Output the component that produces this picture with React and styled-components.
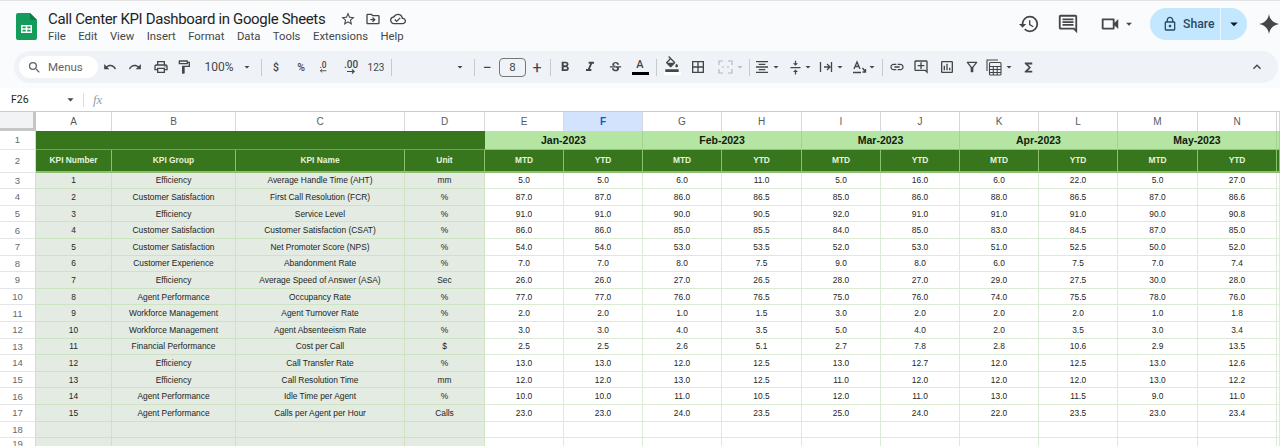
import React from "react";
import styled, { createGlobalStyle } from "styled-components";
import {
  MdSearch, MdUndo, MdRedo, MdOutlinePrint, MdOutlineFormatPaint, MdFormatBold, MdFormatItalic,
  MdStrikethroughS, MdOutlineFormatColorFill, MdBorderAll, MdFormatAlignCenter, MdVerticalAlignCenter,
  MdLink, MdOutlineAddComment, MdOutlineInsertChart, MdOutlineFilterAlt, MdFunctions, MdExpandLess,
  MdHistory, MdOutlineComment, MdOutlineVideocam, MdOutlineLock, MdStarBorder, MdOutlineDriveFileMove,
  MdOutlineCloudDone, MdArrowDropDown,
} from "react-icons/md";

const Global = createGlobalStyle`
  html, body { margin: 0; padding: 0; background: #f9fbfd; }
  body { font-family: "Liberation Sans", Arial, sans-serif; width: 1280px; height: 446px; overflow: hidden; }
`;

const Page = styled.div`
  width: 1280px;
  height: 446px;
  overflow: hidden;
  display: flex;
  flex-direction: column;
  border-top: 1px solid #e3e3e3;
  box-sizing: border-box;
`;

const Header = styled.header`
  height: 50px;
  flex: none;
  display: flex;
  align-items: flex-start;
  padding: 12px 1px 0 16px;
  box-sizing: border-box;
`;

const TitleBlock = styled.div`
  margin-left: 11px;
  margin-top: -5px;
  display: flex;
  flex-direction: column;
`;

const TitleRow = styled.div`
  display: flex;
  align-items: center;
  height: 21px;
`;

const Title = styled.div`
  font-family: "Roboto", sans-serif;
  font-size: 15px;
  letter-spacing: -0.35px;
  color: #1f1f1f;
  width: 287px;
  white-space: nowrap;
`;

const TitleIcon = styled.span`
  display: flex;
  justify-content: center;
  width: 25px;
  color: #444746;
  font-size: 16px;
`;

const MenuRow = styled.nav`
  display: flex;
  gap: 12.5px;
  margin-top: 1px;
`;

const MenuItem = styled.span`
  font-family: "Roboto", sans-serif;
  font-size: 11.3px;
  line-height: 14px;
  color: #444746;
`;

const Actions = styled.div`
  margin-left: auto;
  margin-top: -5px;
  display: flex;
  align-items: center;
  height: 32px;
`;

const ActionIcon = styled.span`
  display: flex;
  align-items: center;
  justify-content: center;
  width: ${(p) => p.$w}px;
  margin-right: ${(p) => p.$mr || 0}px;
  color: #444746;
  font-size: ${(p) => p.$size || 22}px;
`;

const ShareButton = styled.div`
  width: 97px;
  height: 32px;
  border-radius: 16px;
  background: #c2e7ff;
  display: flex;
  align-items: center;
  color: #001d35;
  margin-right: 12px;
`;

const ShareMain = styled.div`
  width: 71px;
  height: 32px;
  display: flex;
  align-items: center;
  gap: 5px;
  padding-left: 12px;
  box-sizing: border-box;
  border-right: 1px solid #e8f5fe;
  font-family: "Roboto", sans-serif;
  font-size: 12.2px;
  font-weight: 500;
  color: #2a4a63;
`;

const ShareCaret = styled.div`
  flex: 1;
  display: flex;
  justify-content: center;
  font-size: 18px;
`;

const Toolbar = styled.div`
  height: 32px;
  flex: none;
  margin: 0 2px 0 14px;
  border-radius: 16px;
  background: #eff3f8;
  display: flex;
  align-items: center;
  padding-left: 5px;
`;

const SearchPill = styled.div`
  width: 79px;
  height: 22px;
  flex: none;
  border-radius: 11px;
  background: #fff;
  display: flex;
  align-items: center;
  gap: 6px;
  padding-left: 8px;
  box-sizing: border-box;
  font-family: "Roboto", sans-serif;
  font-size: 11.5px;
  color: #5f6368;
`;

const Tool = styled.span`
  flex: none;
  display: flex;
  align-items: center;
  justify-content: center;
  width: ${(p) => p.$w}px;
  margin-left: ${(p) => p.$ml}px;
  color: ${(p) => (p.$muted ? "#b4b8bb" : "#444746")};
  font-family: "Roboto", sans-serif;
  font-size: ${(p) => p.$fs || 12}px;
  font-weight: ${(p) => p.$fw || 400};
  white-space: nowrap;
`;

const Divider = styled.span`
  width: 1px;
  height: 17px;
  background: #c7c9cc;
`;

const SizeBox = styled.span`
  width: 27px;
  height: 19px;
  box-sizing: border-box;
  border: 1px solid #747775;
  border-radius: 4px;
  display: flex;
  align-items: center;
  justify-content: center;
  font-size: 11.5px;
  color: #444746;
`;

const ColorA = styled.span`
  width: 17px;
  display: flex;
  flex-direction: column;
  align-items: center;
  font-size: 11px;
  line-height: 12px;
  font-weight: 500;
  &::after {
    content: "";
    width: 17px;
    height: 3px;
    background: #000;
    margin-top: 1px;
  }
`;

const FillIcon = styled.span`
  display: flex;
  flex-direction: column;
  align-items: center;
  height: 19px;
  margin-top: -3px;
  &::after {
    content: "";
    width: 17px;
    height: 3px;
    background: #fff;
  }
`;

const FormulaBar = styled.div`
  height: 23px;
  margin-top: 5px;
  flex: none;
  background: #fff;
  display: flex;
  align-items: center;
  font-size: 10.5px;
  color: #1f1f1f;
  padding-left: 11px;
  box-sizing: border-box;
`;

const CellRef = styled.span`
  width: 50px;
  font-family: "Roboto", sans-serif;
`;

const BarCaret = styled.span`
  display: flex;
  width: 18px;
  justify-content: center;
  font-size: 15px;
  color: #444746;
`;

const BarRule = styled.span`
  width: 1px;
  height: 14px;
  background: #dadce0;
  margin-left: 4px;
`;

const Fx = styled.span`
  margin-left: 9px;
  font-family: "Liberation Serif", serif;
  font-style: italic;
  font-size: 13px;
  color: #9aa0a6;
`;

const Sheet = styled.div`
  flex: none;
  display: grid;
  width: 1280px;
  grid-template-columns: 36px 76px 124px 169px 80px 79px 79px 79px 80px 79px 79px 79px 79px 80px 79px 3px;
  grid-template-rows: 19px 18.6px 23px repeat(16, 16.6px);
  border-top: 1px solid #c9cccf;
  background: #fff;
`;

const Cell = styled.div`
  grid-column: span ${(p) => p.$span || 1};
  box-sizing: border-box;
  display: flex;
  align-items: center;
  justify-content: center;
  min-width: 0;
  white-space: nowrap;
`;

const Corner = styled(Cell)`
  background: #f1f3f4;
  border-right: 3px solid #c4c7c5;
  border-bottom: 3px solid #c4c7c5;
`;

const ColHead = styled(Cell)`
  font-size: 10px;
  color: ${(p) => (p.$active ? "#0b57d0" : "#575a5e")};
  font-weight: ${(p) => (p.$active ? 700 : 400)};
  background: ${(p) => (p.$active ? "#d3e3fd" : "#fff")};
  border-right: 1px solid #d5d7d9;
`;

const RowHead = styled(Cell)`
  font-size: 9.5px;
  color: #666a6e;
  background: #fff;
  border-bottom: 1px solid #e4e5e7;
  border-right: 1px solid #d5d7d9;
`;

const Banner = styled(Cell)`
  background: #38761d;
  border-bottom: 1px solid #6fa650;
`;

const Month = styled(Cell)`
  background: #b5e5a3;
  color: #10200c;
  font-size: 10.5px;
  font-weight: 700;
  border-right: 1px solid #a3d38f;
  border-bottom: 1px solid #8fc676;
`;

const HeadCell = styled(Cell)`
  background: #38761d;
  color: #e6f4dc;
  font-size: 8.4px;
  font-weight: 700;
  border-right: 1px solid #8cc06f;
  border-bottom: 2px solid #8cc06f;
`;

const LabelCell = styled(Cell)`
  background: #e3ebe2;
  color: #222522;
  font-size: 8.4px;
  border-right: 1px solid #cde3c2;
  border-bottom: 1px solid #cde3c2;
`;

const ValueCell = styled(Cell)`
  background: #fff;
  color: #242624;
  font-size: 8.4px;
  border-right: 1px solid #dcebd3;
  border-bottom: 1px solid #dcebd3;
`;

const columns = ["A", "B", "C", "D", "E", "F", "G", "H", "I", "J", "K", "L", "M", "N", ""];
const months = ["Jan-2023", "Feb-2023", "Mar-2023", "Apr-2023", "May-2023"];
const rows = [
  ["Efficiency", "Average Handle Time (AHT)", "mm", [5, 5, 6, 11, 5, 16, 6, 22, 5, 27]],
  ["Customer Satisfaction", "First Call Resolution (FCR)", "%", [87, 87, 86, 86.5, 85, 86, 88, 86.5, 87, 86.6]],
  ["Efficiency", "Service Level", "%", [91, 91, 90, 90.5, 92, 91, 91, 91, 90, 90.8]],
  ["Customer Satisfaction", "Customer Satisfaction (CSAT)", "%", [86, 86, 85, 85.5, 84, 85, 83, 84.5, 87, 85]],
  ["Customer Satisfaction", "Net Promoter Score (NPS)", "%", [54, 54, 53, 53.5, 52, 53, 51, 52.5, 50, 52]],
  ["Customer Experience", "Abandonment Rate", "%", [7, 7, 8, 7.5, 9, 8, 6, 7.5, 7, 7.4]],
  ["Efficiency", "Average Speed of Answer (ASA)", "Sec", [26, 26, 27, 26.5, 28, 27, 29, 27.5, 30, 28]],
  ["Agent Performance", "Occupancy Rate", "%", [77, 77, 76, 76.5, 75, 76, 74, 75.5, 78, 76]],
  ["Workforce Management", "Agent Turnover Rate", "%", [2, 2, 1, 1.5, 3, 2, 2, 2, 1, 1.8]],
  ["Workforce Management", "Agent Absenteeism Rate", "%", [3, 3, 4, 3.5, 5, 4, 2, 3.5, 3, 3.4]],
  ["Financial Performance", "Cost per Call", "$", [2.5, 2.5, 2.6, 5.1, 2.7, 7.8, 2.8, 10.6, 2.9, 13.5]],
  ["Efficiency", "Call Transfer Rate", "%", [13, 13, 12, 12.5, 13, 12.7, 12, 12.5, 13, 12.6]],
  ["Efficiency", "Call Resolution Time", "mm", [12, 12, 13, 12.5, 11, 12, 12, 12, 13, 12.2]],
  ["Agent Performance", "Idle Time per Agent", "%", [10, 10, 11, 10.5, 12, 11, 13, 11.5, 9, 11]],
  ["Agent Performance", "Calls per Agent per Hour", "Calls", [23, 23, 24, 23.5, 25, 24, 22, 23.5, 23, 23.4]],
];
const menus = ["File", "Edit", "View", "Insert", "Format", "Data", "Tools", "Extensions", "Help"];

const SheetsLogo = () => (
  <svg width="21" height="27" viewBox="0 0 21 27">
    <path d="M2 0h12l7 7v18a2 2 0 0 1-2 2H2a2 2 0 0 1-2-2V2a2 2 0 0 1 2-2z" fill="#149c5b" />
    <path d="M14 0l7 7h-5a2 2 0 0 1-2-2z" fill="#0e7c47" />
    <path d="M5 12h11v8H5z M6.5 13.5v1.7h3.2v-1.7z M11.3 13.5v1.7h3.2v-1.7z M6.5 16.8v1.7h3.2v-1.7z M11.3 16.8v1.7h3.2v-1.7z" fill="#fff" fillRule="evenodd" />
  </svg>
);

const Spark = () => (
  <svg width="20" height="20" viewBox="0 0 20 20">
    <path d="M10 0c.9 5.4 3.9 8.9 10 10-6.1 1.1-9.1 4.6-10 10-.9-5.4-3.9-8.9-10-10C6.1 8.9 9.100 5.400 10 0z" fill="#444746" />
  </svg>
);

const Merge = () => (
  <svg width="15" height="14" viewBox="0 0 15 14" fill="none" stroke="#b4b8bb" strokeWidth="1.2">
    <path d="M1 5V1h4M14 5V1h-4M1 9v4h4M14 9v4h-4M4 7h2M9 7h2" />
  </svg>
);

const Wrap = () => (
  <svg width="14" height="14" viewBox="0 0 14 14" fill="none" stroke="#444746" strokeWidth="1.3">
    <path d="M1.500 2v10M5 7h6M8 4l3 3-3 3M12.500 2v10" />
  </svg>
);

const Rotate = () => (
  <svg width="15" height="14" viewBox="0 0 15 14" fill="none" stroke="#444746" strokeWidth="1.3">
    <path d="M1 12.500h8M2 9l3-7 3 7M3.200 6.500h3.600M10.500 8l3 4M13.500 9v3h-3" />
  </svg>
);

const Calc = () => (
  <svg width="16" height="17" viewBox="0 0 16 17" fill="none" stroke="#444746" strokeWidth="1.1">
    <path d="M1 12V1h11" />
    <rect x="3.500" y="3.500" width="11.500" height="12.500" rx="1" />
    <path d="M3.500 7.500h11.500M3.500 10.500h11.500M3.500 13.500h11.500M7.300 7.500V16M11.200 7.500V16" />
  </svg>
);

const Dec = ({ text, right }) => (
  <svg width="24" height="14" viewBox="0 0 24 14">
    <text x="12" y="8" textAnchor="middle" fontSize="10" fontWeight="500" fill="#444746" fontFamily="Roboto, sans-serif">{text}</text>
    <path d={right ? "M8 11.500h7M13 9.500l2.200 2-2.200 2" : "M9 11.500h7M11 9.500l-2.200 2 2.200 2"} stroke="#444746" strokeWidth="1.1" fill="none" />
  </svg>
);

const Caret = () => <MdArrowDropDown size={16} />;

const toolDefs = [
  [110, 16, <MdUndo size={14} />],
  [135, 16, <MdRedo size={14} />],
  [161, 16, <MdOutlinePrint size={16} />],
  [184, 16, <MdOutlineFormatPaint size={16} />],
  [219, 34, "100%", { $fs: 12 }],
  [247, 12, <Caret />],
  [261, 1, <Divider />],
  [276, 10, "$", { $fs: 10.5, $fw: 500 }],
  [301, 12, "%", { $fs: 10.5, $fw: 500 }],
  [323, 20, <Dec text=".0" />],
  [351, 24, <Dec text=".00" right />],
  [376, 20, "123", { $fs: 10 }],
  [391.5, 1, <Divider />],
  [459.5, 12, <Caret />],
  [474.5, 1, <Divider />],
  [487, 12, "−", { $fs: 16 }],
  [512.500, 27, <SizeBox>8</SizeBox>],
  [537, 12, "+", { $fs: 16 }],
  [550.5, 1, <Divider />],
  [565, 16, <MdFormatBold size={16} />],
  [590, 16, <MdFormatItalic size={16} />],
  [615, 16, <MdStrikethroughS size={15} />],
  [640, 17, <ColorA>A</ColorA>],
  [656.5, 1, <Divider />],
  [672, 17, <FillIcon><MdOutlineFormatColorFill size={16} /></FillIcon>],
  [698, 16, <MdBorderAll size={16} />],
  [725, 16, <Merge />],
  [740, 12, <Caret />, { $muted: true }],
  [749.5, 1, <Divider />],
  [762, 16, <MdFormatAlignCenter size={16} />],
  [776, 12, <Caret />],
  [795, 16, <MdVerticalAlignCenter size={15} />],
  [808, 12, <Caret />],
  [826, 16, <Wrap />],
  [840, 12, <Caret />],
  [859, 16, <Rotate />],
  [872, 12, <Caret />],
  [882, 1, <Divider />],
  [897, 16, <MdLink size={16} />],
  [921, 16, <MdOutlineAddComment size={16} />],
  [947, 16, <MdOutlineInsertChart size={16} />],
  [972, 16, <MdOutlineFilterAlt size={16} />],
  [994, 16, <Calc />],
  [1009, 12, <Caret />],
  [1028, 16, <MdFunctions size={15} />],
  [1257, 16, <MdExpandLess size={18} />],
];

const Tools = () => {
  let edge = 98;
  return toolDefs.map(([center, w, node, extra], i) => {
    const ml = center - w / 2 - edge;
    edge = center + w / 2;
    return (
      <Tool key={i} $w={w} $ml={ml} {...extra}>
        {node}
      </Tool>
    );
  });
};

export default function App() {
  return (
    <Page>
      <Global />
      <Header>
        <SheetsLogo />
        <TitleBlock>
          <TitleRow>
            <Title>Call Center KPI Dashboard in Google Sheets</Title>
            <TitleIcon><MdStarBorder /></TitleIcon>
            <TitleIcon><MdOutlineDriveFileMove /></TitleIcon>
            <TitleIcon><MdOutlineCloudDone /></TitleIcon>
          </TitleRow>
          <MenuRow>
            {menus.map((m) => <MenuItem key={m}>{m}</MenuItem>)}
          </MenuRow>
        </TitleBlock>
        <Actions>
          <ActionIcon $w={24} $mr={15}><MdHistory /></ActionIcon>
          <ActionIcon $w={24} $mr={18}><MdOutlineComment /></ActionIcon>
          <ActionIcon $w={24}><MdOutlineVideocam /></ActionIcon>
          <ActionIcon $w={14} $size={14} $mr={14}><MdArrowDropDown /></ActionIcon>
          <ShareButton>
            <ShareMain><MdOutlineLock size={16} /> Share</ShareMain>
            <ShareCaret><MdArrowDropDown /></ShareCaret>
          </ShareButton>
          <Spark />
        </Actions>
      </Header>
      <Toolbar>
        <SearchPill><MdSearch size={15} /> Menus</SearchPill>
        <Tools />
      </Toolbar>
      <FormulaBar>
        <CellRef>F26</CellRef>
        <BarCaret><MdArrowDropDown /></BarCaret>
        <BarRule />
        <Fx>fx</Fx>
      </FormulaBar>
      <Sheet>
        <Corner />
        {columns.map((c) => <ColHead key={c} $active={c === "F"}>{c}</ColHead>)}

        <RowHead>1</RowHead>
        <Banner $span={4} />
        {months.map((m) => <Month key={m} $span={2}>{m}</Month>)}
        <Month />

        <RowHead>2</RowHead>
        <HeadCell>KPI Number</HeadCell>
        <HeadCell>KPI Group</HeadCell>
        <HeadCell>KPI Name</HeadCell>
        <HeadCell>Unit</HeadCell>
        {months.flatMap((m) => [
          <HeadCell key={m + "m"}>MTD</HeadCell>,
          <HeadCell key={m + "y"}>YTD</HeadCell>,
        ])}
        <HeadCell />

        {rows.map(([group, name, unit, values], i) => (
          <React.Fragment key={name}>
            <RowHead>{i + 3}</RowHead>
            <LabelCell>{i + 1}</LabelCell>
            <LabelCell>{group}</LabelCell>
            <LabelCell>{name}</LabelCell>
            <LabelCell>{unit}</LabelCell>
            {values.map((v, j) => <ValueCell key={j}>{v.toFixed(1)}</ValueCell>)}
            <ValueCell />
          </React.Fragment>
        ))}
        {[18, 19].map((n) => (
          <React.Fragment key={n}>
            <RowHead>{n}</RowHead>
            {[0, 1, 2, 3].map((k) => <LabelCell key={k} />)}
            {Array.from({ length: 11 }, (_, k) => <ValueCell key={k} />)}
          </React.Fragment>
        ))}
      </Sheet>
    </Page>
  );
}
